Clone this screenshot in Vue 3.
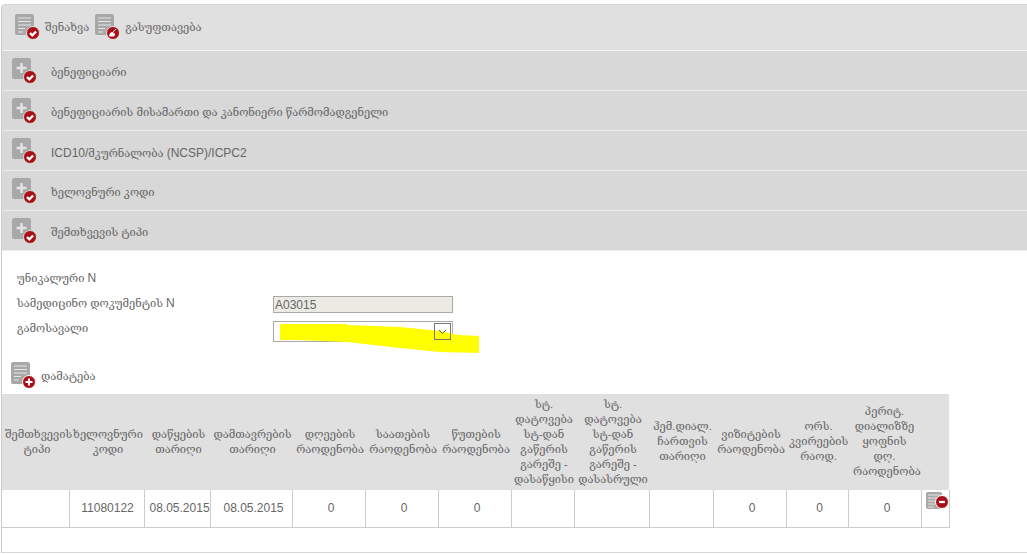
<script setup>
const sections = [
  'ბენეფიციარი',
  'ბენეფიციარის მისამართი და კანონიერი წარმომადგენელი',
  'ICD10/მკურნალობა (NCSP)/ICPC2',
  'ხელოვნური კოდი',
  'შემთხვევის ტიპი'
]
const parts = (s) => s.split(/([A-Za-z0-9()\/]+)/)
const headers = [
  'შემთხვევის ტიპი', 'ხელოვნური კოდი', 'დაწყების თარიღი', 'დამთავრების თარიღი',
  'დღეების რაოდენობა', 'საათების რაოდენობა', 'წუთების რაოდენობა',
  'სტ. დატოვება სტ-დან გაწერის გარეშე - დასაწყისი',
  'სტ. დატოვება სტ-დან გაწერის გარეშე - დასასრული',
  'ჰემ.დიალ. ჩართვის თარიღი', 'ვიზიტების რაოდენობა', 'ორს. კვირეების რაოდ.',
  'პერიტ. დიალიზზე ყოფნის დღ. რაოდენობა', ''
]
const cells = ['', '11080122', '08.05.2015', '08.05.2015', '0', '0', '0', '', '', '', '0', '0', '0']
</script>

<template>
  <div class="page">
    <div class="toolbar">
      <a class="tool">
        <svg class="ic" width="26" height="26" viewBox="0 0 26 26">
          <rect x="0" y="0" width="19" height="21" rx="2" fill="#a8a8a8" />
          <path d="M3 4h13M3 7.500h13M3 11h13M3 14.500h7M3 18h5" stroke="#e6e6e6" stroke-width="1.200" />
          <circle cx="18" cy="19" r="6.500" fill="#a90f17" stroke="#e0e0e0" stroke-width="1" />
          <path d="M15 19l2.300 2.300 3.800-3.800" fill="none" stroke="#fff" stroke-width="2.400" />
        </svg>
        <span>შენახვა</span>
      </a>
      <a class="tool">
        <svg class="ic" width="26" height="26" viewBox="0 0 26 26">
          <rect x="0" y="0" width="19" height="21" rx="2" fill="#a8a8a8" />
          <path d="M3 4h13M3 7.500h13M3 11h13M3 14.500h7M3 18h5" stroke="#e6e6e6" stroke-width="1.200" />
          <circle cx="18" cy="19" r="6.500" fill="#a90f17" stroke="#e0e0e0" stroke-width="1" />
          <path d="M14.500 22l1-3 2.500-.5 1.500 1.500-.5 2zM18 18l3-3" fill="#fff" stroke="#fff" stroke-width="1" />
        </svg>
        <span>გასუფთავება</span>
      </a>
    </div>

    <div v-for="s in sections" :key="s" class="section">
      <svg class="ic2" width="26" height="26" viewBox="0 0 26 26">
        <rect x="0" y="0" width="19" height="21" rx="2.500" fill="#a8a8a8" />
        <path d="M9.500 5v10M4.500 10h10" stroke="#e4e4e4" stroke-width="2.500" />
        <circle cx="18" cy="19" r="6.500" fill="#a90f17" stroke="#d8d8d8" stroke-width="1" />
        <path d="M15 19l2.300 2.300 3.800-3.800" fill="none" stroke="#fff" stroke-width="2.400" />
      </svg>
      <span class="section-label"><template v-for="(p, i) in parts(s)" :key="i"><span :class="{ lat: i % 2 === 1 }">{{ p }}</span></template></span>
    </div>

    <div class="form">
      <div class="field"><label>უნიკალური <span class="lat">N</span></label></div>
      <div class="field">
        <label>სამედიცინო დოკუმენტის <span class="lat">N</span></label>
        <input class="text-input" value="A03015" disabled />
      </div>
      <div class="field">
        <label>გამოსავალი</label>
        <div class="select">
          <svg class="scribble" width="200" height="31" viewBox="0 0 200 31">
            <path d="M0 1H67V2L120 4L160 8L178 12L199 13V30L160 29L120 25L67 19L17 17L0 17Z" fill="#ffff00" />
          </svg>
          <span class="arrow">
            <svg width="9" height="6" viewBox="0 0 9 6"><path d="M1 1l3.500 3.500L8 1" fill="none" stroke="#555" stroke-width="1" /></svg>
          </span>
        </div>
      </div>
    </div>

    <a class="add">
      <svg width="26" height="26" viewBox="0 0 26 26">
        <rect x="0" y="0" width="19" height="22" rx="2" fill="#a8a8a8" />
        <path d="M3 4h13M3 7.500h13M3 11h13M3 14.500h7M3 18h5" stroke="#e6e6e6" stroke-width="1.200" />
        <circle cx="18" cy="20" r="6.500" fill="#a90f17" stroke="#fff" stroke-width="1" />
        <path d="M18 16.500v7M14.500 20h7" stroke="#fff" stroke-width="2" />
      </svg>
      <span class="add-label">დამატება</span>
    </a>

    <table class="grid">
      <thead>
        <tr><th v-for="(h, i) in headers" :key="i">{{ h }}</th></tr>
      </thead>
      <tbody>
        <tr>
          <td v-for="(c, i) in cells" :key="i">{{ c }}</td>
          <td class="action">
            <svg width="26" height="20" viewBox="0 0 26 20">
              <rect x="0" y="0" width="16" height="17" rx="2" fill="#a8a8a8" />
              <path d="M2 3h12M2 6h12M2 9h7M2 12h7M2 15h6" stroke="#e6e6e6" stroke-width="1.200" />
              <circle cx="16" cy="10" r="6.500" fill="#a90f17" stroke="#fff" stroke-width="1" />
              <path d="M13 10h6" stroke="#fff" stroke-width="2.200" />
            </svg>
          </td>
        </tr>
      </tbody>
    </table>
    <div class="bottom"></div>
  </div>
</template>

<style>
html, body { margin: 0; background: #fff; overflow: hidden; }
</style>

<style scoped>
.page {
  box-sizing: border-box;
  width: 1027px;
  height: 549px;
  margin: 4px 0 0 1px;
  border-left: 1px solid #ccc;
  border-top: 1px solid #d8d8d8;
  border-top-left-radius: 4px;
  font: 11.100px "Liberation Sans", "DejaVu Serif", serif;
  color: #666;
  display: flex;
  flex-direction: column;
}
.lat { font-size: 12px; }
.toolbar {
  display: flex;
  align-items: center;
  height: 45px;
  padding-left: 13px;
  gap: 6px;
  background: #e0e0e0;
  border-bottom: 1px solid #f4f4f4;
  flex: none;
}
.tool { display: flex; align-items: center; gap: 4px; }
.tool span { margin-top: -1px; }
.ic { flex: none; margin-top: -2px; }
.ic2 { flex: none; margin-top: 1px; }
.section {
  box-sizing: border-box;
  flex: none;
  height: 40px;
  display: flex;
  align-items: center;
  padding-left: 10px;
  background: #d8d8d8;
  border-bottom: 1px solid #ececec;
}
.section-label { margin-left: 13px; margin-top: 4px; }
.form { flex: none; padding: 17px 0 0 15px; }
.field { display: flex; align-items: center; height: 25.500px; }
.field label { width: 256px; flex: none; margin-top: -6px; }
.text-input {
  box-sizing: border-box;
  width: 180px;
  height: 17px;
  padding: 0 1px;
  margin: -3px 0 0;
  border: 1px solid #a9a9a9;
  background: #ebebe4;
  color: #666;
  font: 12px "Liberation Sans", sans-serif;
}
.select {
  position: relative;
  box-sizing: border-box;
  width: 180px;
  height: 21px;
  border: 1px solid #a9a9a9;
  background: #fff;
}
.scribble { position: absolute; left: 6px; top: 1px; }
.arrow {
  position: absolute;
  right: 1px;
  top: 1px;
  box-sizing: border-box;
  width: 17px;
  height: 17px;
  border: 1px solid #777;
  display: flex;
  align-items: center;
  justify-content: center;
}
.add { flex: none; display: flex; align-items: center; gap: 4px; margin: 17px 0 0 9px; height: 26px; }
.add-label { margin-top: 4px; }
.grid {
  flex: none;
  table-layout: fixed;
  width: 947px;
  margin-top: 6px;
  border-collapse: collapse;
}
.grid th {
  height: 96px;
  padding: 0 0 0 3px;
  background: #e0e0e0;
  font-weight: 400;
  text-align: center;
  vertical-align: middle;
  line-height: 15px;
  box-sizing: border-box;
}
.grid td {
  height: 38px;
  padding: 0 0 0 5px;
  font-size: 12px;
  text-align: center;
  border: 1px solid #ccc;
  border-top: 0;
  border-left: 0;
  box-sizing: border-box;
}
.grid td:nth-child(2) { padding-left: 2px; }
.grid th:nth-child(1), .grid td:nth-child(1) { width: 67px; }
.grid th:nth-child(2), .grid td:nth-child(2) { width: 75px; }
.grid th:nth-child(3), .grid td:nth-child(3) { width: 66px; }
.grid th:nth-child(4), .grid td:nth-child(4) { width: 82px; }
.grid th:nth-child(5), .grid td:nth-child(5) { width: 73px; }
.grid th:nth-child(6), .grid td:nth-child(6) { width: 73px; }
.grid th:nth-child(7), .grid td:nth-child(7) { width: 73px; }
.grid th:nth-child(8), .grid td:nth-child(8) { width: 63px; }
.grid th:nth-child(9), .grid td:nth-child(9) { width: 75px; }
.grid th:nth-child(10), .grid td:nth-child(10) { width: 64px; }
.grid th:nth-child(11), .grid td:nth-child(11) { width: 73px; }
.grid th:nth-child(12), .grid td:nth-child(12) { width: 62px; }
.grid th:nth-child(13), .grid td:nth-child(13) { width: 73px; }
.grid th:nth-child(13) { padding: 0 5px; }
.grid th:nth-child(14), .grid td:nth-child(14) { width: 28px; }
.grid td.action { vertical-align: top; text-align: left; padding: 2px 0 0 4px; line-height: 0; }
.bottom { flex: none; margin-top: 24px; border-bottom: 2px solid #d8d8d8; }
</style>
